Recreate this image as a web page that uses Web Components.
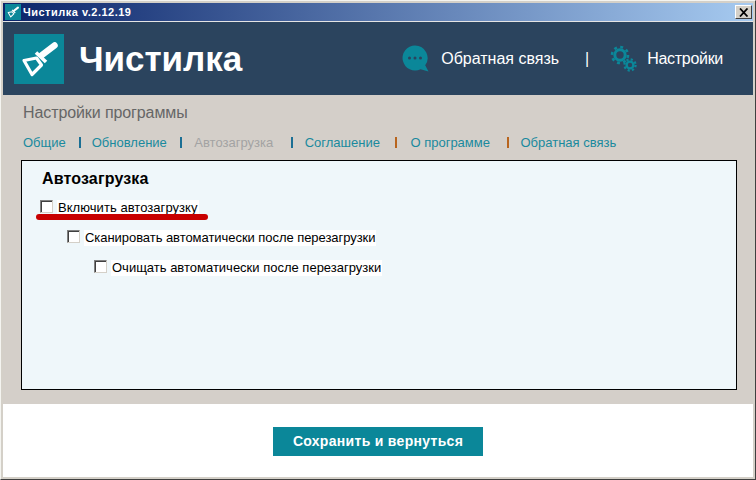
<!DOCTYPE html>
<html>
<head>
<meta charset="utf-8">
<title>Чистилка</title>
<style>
html, body { margin: 0; padding: 0; background: #d4d0c8; }
body { font-family: "Liberation Sans", Arial, sans-serif; }
</style>
</head>
<body>
<app-window></app-window>

<script>
const BROOM = `
  <g fill="none" stroke="#fff" stroke-linejoin="round">
    <path d="M40.5 11.5 L28 21" stroke-width="6.5" stroke-linecap="round"/>
    <path d="M22 18.5 L32 28" stroke-width="3.6"/>
    <path d="M10 26.5 L22.5 24 L27.5 31 L18 40.5 Z" stroke-width="3.2"/>
  </g>`;

class TitleBar extends HTMLElement {
    constructor() {
        super();
        this.attachShadow({ mode: 'open' });
        this.shadowRoot.innerHTML = `
            <style>
                :host {
                    display: flex;
                    align-items: center;
                    height: 18px;
                    background: linear-gradient(to right, #0a246a, #a6caf0);
                    border-bottom: 1px solid #e4e4e4;
                    color: #fff;
                    font: bold 11px "Liberation Sans", Arial, sans-serif;
                    padding-left: 2px;
                    padding-right: 1px;
                }
                .ico { width: 16px; height: 16px; background: #0b8799; margin-right: 2px; flex: none; display: block; }
                .txt { flex: 1; letter-spacing: 0.5px; }
                .x {
                    width: 17px; height: 14px; box-sizing: border-box; flex: none; background: #d4d0c8;
                    border: 1px solid; border-color: #fff #404040 #404040 #fff;
                    display: flex; align-items: center; justify-content: center;
                }
            </style>
            <svg class="ico" viewBox="0 0 50 50">${BROOM}</svg>
            <span class="txt"><slot></slot></span>
            <span class="x"><svg width="10" height="9" viewBox="0 0 10 9"><path d="M1 0.5 L8.5 8.5 M8.5 0.5 L1 8.5" stroke="#000" stroke-width="1.8"/></svg></span>
        `;
    }
}

class AppHeader extends HTMLElement {
    constructor() {
        super();
        this.attachShadow({ mode: 'open' });
        this.shadowRoot.innerHTML = `
            <style>
                :host {
                    display: flex;
                    align-items: center;
                    height: 73px;
                    background: #2b445e;
                    color: #fff;
                    padding-left: 11px;
                    font-family: "Liberation Sans", Arial, sans-serif;
                }
                .logo { width: 50px; height: 50px; background: #0b8799; flex: none; display: block; }
                h1 { margin: 0 0 0 15px; font-size: 35px; font-weight: bold; line-height: 50px; flex: 1; letter-spacing: -0.05px; }
                .link { display: flex; align-items: center; font-size: 16px; }
                .sep { margin: 0 21px 0 26px; font-size: 16px; }
                .fb svg { margin-right: 12px; }
                .st { margin-right: 30px; letter-spacing: -0.3px; }
                .st svg { margin-right: 10px; }
            </style>
            <svg class="logo" viewBox="0 0 50 50">${BROOM}</svg>
            <h1>Чистилка</h1>
            <span class="link fb">
                <svg width="27" height="27" viewBox="0 0 27 27">
                    <path d="M13 0.5 A12.5 12.5 0 1 0 18.6 24.2 L26.5 26.5 L23.2 20.3 A12.5 12.5 0 0 0 13 0.5 Z" fill="#0b8799"/>
                    <circle cx="7.5" cy="13" r="1.5" fill="#2b445e"/>
                    <circle cx="13" cy="13" r="1.5" fill="#2b445e"/>
                    <circle cx="18.5" cy="13" r="1.5" fill="#2b445e"/>
                </svg>
                Обратная связь
            </span>
            <span class="sep">|</span>
            <span class="link st">
                <svg width="27" height="27" viewBox="0 0 27 27">
                    <g fill="none" stroke="#0b8799">
                        <circle cx="10" cy="10" r="5.2" stroke-width="3"/>
                        <circle cx="10" cy="10" r="8" stroke-width="2.6" stroke-dasharray="2.9 3.38"/>
                        <circle cx="20" cy="20" r="3.4" stroke-width="2.4"/>
                        <circle cx="20" cy="20" r="5.6" stroke-width="2.2" stroke-dasharray="2.2 2.2"/>
                    </g>
                </svg>
                Настройки
            </span>
        `;
    }
}

class TabLink extends HTMLElement {
    constructor() {
        super();
        this.attachShadow({ mode: 'open' });
    }

    connectedCallback() {
        const sep = this.getAttribute('sep');
        const activa = this.hasAttribute('active');
        const izq = this.getAttribute('ml') || 13;
        const der = this.getAttribute('mr') || 12;
        this.shadowRoot.innerHTML = `
            <style>
                :host { display: inline-flex; align-items: center; font-size: 13px; color: ${activa ? '#a3a3a3' : '#1a8a9e'}; white-space: nowrap; }
                .bar { width: 2px; height: 11px; margin: 1px ${der}px 0 ${izq}px; background: ${sep || 'transparent'}; }
            </style>
            <slot></slot>
            ${sep ? '<span class="bar"></span>' : ''}
        `;
    }
}

class CheckRow extends HTMLElement {
    constructor() {
        super();
        this.attachShadow({ mode: 'open' });
        const nivel = Number(this.getAttribute('level') || 0);
        const espacio = this.getAttribute('spacing') || 0;
        this.shadowRoot.innerHTML = `
            <style>
                :host { display: flex; align-items: center; height: 16px; margin-left: ${nivel * 27}px; color: #000; font-size: 13px; }
                .box {
                    width: 13px; height: 13px; box-sizing: border-box; margin: -3px 4px 0 1px; background: #fff; flex: none;
                    border: 1px solid; border-color: #808080 #d4d0c8 #d4d0c8 #808080;
                    box-shadow: inset 1px 1px 0 #404040;
                }
                .lab { background: #fff; padding: 0 1px; line-height: 16px; letter-spacing: ${espacio}px; white-space: nowrap; }
            </style>
            <span class="box"></span>
            <span class="lab"><slot></slot></span>
        `;
    }
}

class SettingsPanel extends HTMLElement {
    constructor() {
        super();
        this.attachShadow({ mode: 'open' });
        this.shadowRoot.innerHTML = `
            <style>
                :host {
                    display: flex;
                    flex-direction: column;
                    gap: 14px;
                    position: relative;
                    box-sizing: border-box;
                    height: 230px;
                    margin: 0 16px 0 18px;
                    padding: 10px 0 0 17px;
                    background: #eff7fa;
                    border: 1px solid #000;
                }
                h2 { margin: 0 0 -1px 3px; font-size: 16px; line-height: 16px; color: #000; letter-spacing: 0.15px; }
                .mark {
                    position: absolute; left: 14px; top: 53px; width: 172px; height: 6px;
                    background: #c80000; border-radius: 3px;
                }
            </style>
            <h2>Автозагрузка</h2>
            <slot></slot>
            <span class="mark"></span>
        `;
    }
}

class AppWindow extends HTMLElement {
    constructor() {
        super();
        this.attachShadow({ mode: 'open' });
        this.shadowRoot.innerHTML = `
            <style>
                :host {
                    display: block;
                    box-sizing: border-box;
                    width: 756px;
                    height: 480px;
                    padding: 2px;
                    background: #d4d0c8;
                    border: 1px solid;
                    border-color: #f4f4f0 #404040 #404040 #f4f4f0;
                    font-family: "Liberation Sans", Arial, sans-serif;
                }
                .body { background: #d4cfc9; height: 309px; display: flex; flex-direction: column; }
                .head { margin: 9px 0 0 20px; font-size: 16px; line-height: 18px; color: #666; letter-spacing: -0.1px; }
                nav { display: flex; margin: 11px 0 9px 20px; height: 18px; align-items: center; }
                .foot {
                    height: 73px; background: #fff;
                    display: flex; align-items: flex-start; justify-content: center;
                }
                button {
                    margin: 23px 0 0 0;
                    width: 210px; height: 29px; border: 0; padding: 0 0 1px;
                    background: #0b8799; color: #fff;
                    font: bold 14px "Liberation Sans", Arial, sans-serif;
                    letter-spacing: 0.3px;
                }
            </style>
            <title-bar>Чистилка v.2.12.19</title-bar>
            <app-header></app-header>
            <div class="body">
                <div class="head">Настройки программы</div>
                <nav>
                    <tab-link sep="#1b6f94" ml="13" mr="11">Общие</tab-link>
                    <tab-link sep="#1b6f94" ml="13.5" mr="12">Обновление</tab-link>
                    <tab-link sep="#1b6f94" ml="17.5" mr="12" active>Автозагрузка</tab-link>
                    <tab-link sep="#b8651e" ml="15.5" mr="13">Соглашение</tab-link>
                    <tab-link sep="#b8651e" ml="17.5" mr="11">О программе</tab-link>
                    <tab-link>Обратная связь</tab-link>
                </nav>
                <settings-panel>
                    <check-row level="0" spacing="0.05">Включить автозагрузку</check-row>
                    <check-row level="1" spacing="-0.05">Сканировать автоматически после перезагрузки</check-row>
                    <check-row level="2" spacing="0">Очищать автоматически после перезагрузки</check-row>
                </settings-panel>
            </div>
            <div class="foot"><button>Сохранить и вернуться</button></div>
        `;
    }
}

customElements.define('title-bar', TitleBar);
customElements.define('app-header', AppHeader);
customElements.define('tab-link', TabLink);
customElements.define('check-row', CheckRow);
customElements.define('settings-panel', SettingsPanel);
customElements.define('app-window', AppWindow);
</script>
</body>
</html>
